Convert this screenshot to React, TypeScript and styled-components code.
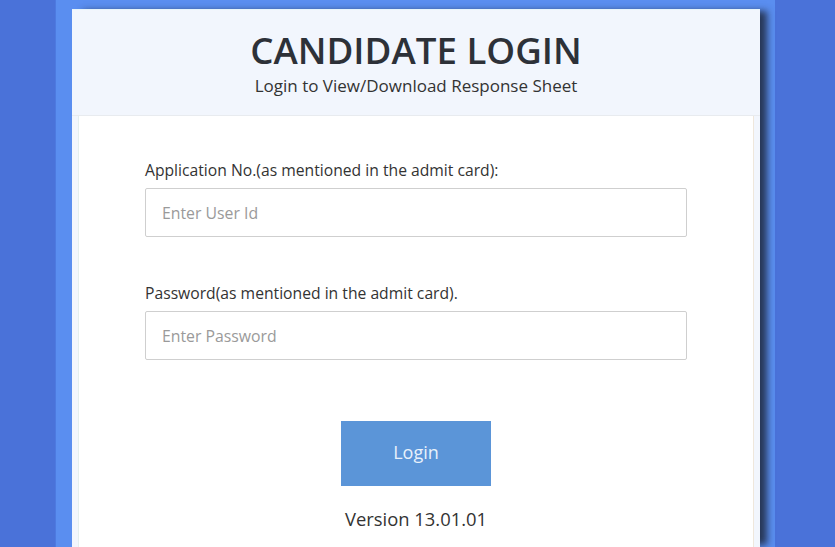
import React from "react";
import styled, { createGlobalStyle } from "styled-components";

const Global = createGlobalStyle`
  html, body { margin: 0; padding: 0; }
  body {
    background: #4a72d9;
    font-family: "Open Sans", "Liberation Sans", sans-serif;
    overflow: hidden;
  }
`;

const Page = styled.div`
  width: 835px;
  height: 547px;
  display: flex;
  justify-content: flex-start;
  padding-left: 55px;
  box-sizing: border-box;
`;

const Column = styled.div`
  width: 720px;
  height: 100%;
  background: #5a8ef0;
  padding: 9px 0 0 16px;
  box-sizing: border-box;
  border-left: 1px solid #4d7ae0;
`;

const Card = styled.div`
  width: 688px;
  height: 100%;
  background: #f2f6fd;
  border-top: 1px solid #e6f4fb;
  box-sizing: border-box;
  box-shadow: 9px 0 7px -2px rgba(30, 40, 60, 0.85);
  display: flex;
  flex-direction: column;
`;

const Header = styled.div`
  height: 106px;
  display: flex;
  flex-direction: column;
  align-items: center;
  padding-top: 17px;
  box-sizing: border-box;
  border-bottom: 1px solid #e8ebef;
`;

const Title = styled.h1`
  margin: 0;
  font-size: 36.7px;
  font-weight: 600;
  line-height: 46px;
  color: #2d3138;
`;

const Subtitle = styled.div`
  font-size: 17px;
  line-height: 22px;
  color: #333;
  margin-top: 2px;
`;

const Body = styled.div`
  flex: 1;
  margin: 0 6px;
  background: #fff;
  border-left: 1px solid #e4efee;
  border-right: 1px solid #efe7dc;
  padding: 44px 66px 0;
  display: flex;
  flex-direction: column;
`;

const Field = styled.div<{ $gap?: number }>`
  display: flex;
  flex-direction: column;
  margin-top: ${(p) => p.$gap ?? 0}px;
`;

const Label = styled.label`
  font-size: 15.7px;
  line-height: 21px;
  color: #333;
  margin-bottom: 7px;
`;

const Input = styled.input`
  height: 49px;
  box-sizing: border-box;
  border: 1px solid #cfcfcf;
  border-radius: 2px;
  padding: 0 16px;
  font-family: "Open Sans", "Liberation Sans", sans-serif;
  font-size: 15.8px;
  color: #555;
  outline: none;
  &::placeholder { color: #9a9a9a; }
`;

const Actions = styled.div`
  display: flex;
  flex-direction: column;
  align-items: center;
  margin-top: 61px;
`;

const Button = styled.button`
  width: 150px;
  height: 65px;
  border: none;
  background: #5b95d8;
  color: #e8f1fb;
  font-family: "Open Sans", "Liberation Sans", sans-serif;
  font-size: 18px;
  padding: 0 0 3px;
  cursor: pointer;
`;

const Version = styled.div`
  margin-top: 21px;
  font-size: 18.4px;
  line-height: 24px;
  color: #333;
`;

export default function App() {
  return (
    <>
      <Global />
      <Page>
        <Column>
          <Card>
            <Header>
              <Title>CANDIDATE LOGIN</Title>
              <Subtitle>Login to View/Download Response Sheet</Subtitle>
            </Header>
            <Body>
              <Field>
                <Label>Application No.(as mentioned in the admit card):</Label>
                <Input placeholder="Enter User Id" />
              </Field>
              <Field $gap={46}>
                <Label>Password(as mentioned in the admit card).</Label>
                <Input type="password" placeholder="Enter Password" />
              </Field>
              <Actions>
                <Button>Login</Button>
                <Version>Version 13.01.01</Version>
              </Actions>
            </Body>
          </Card>
        </Column>
      </Page>
    </>
  );
}
